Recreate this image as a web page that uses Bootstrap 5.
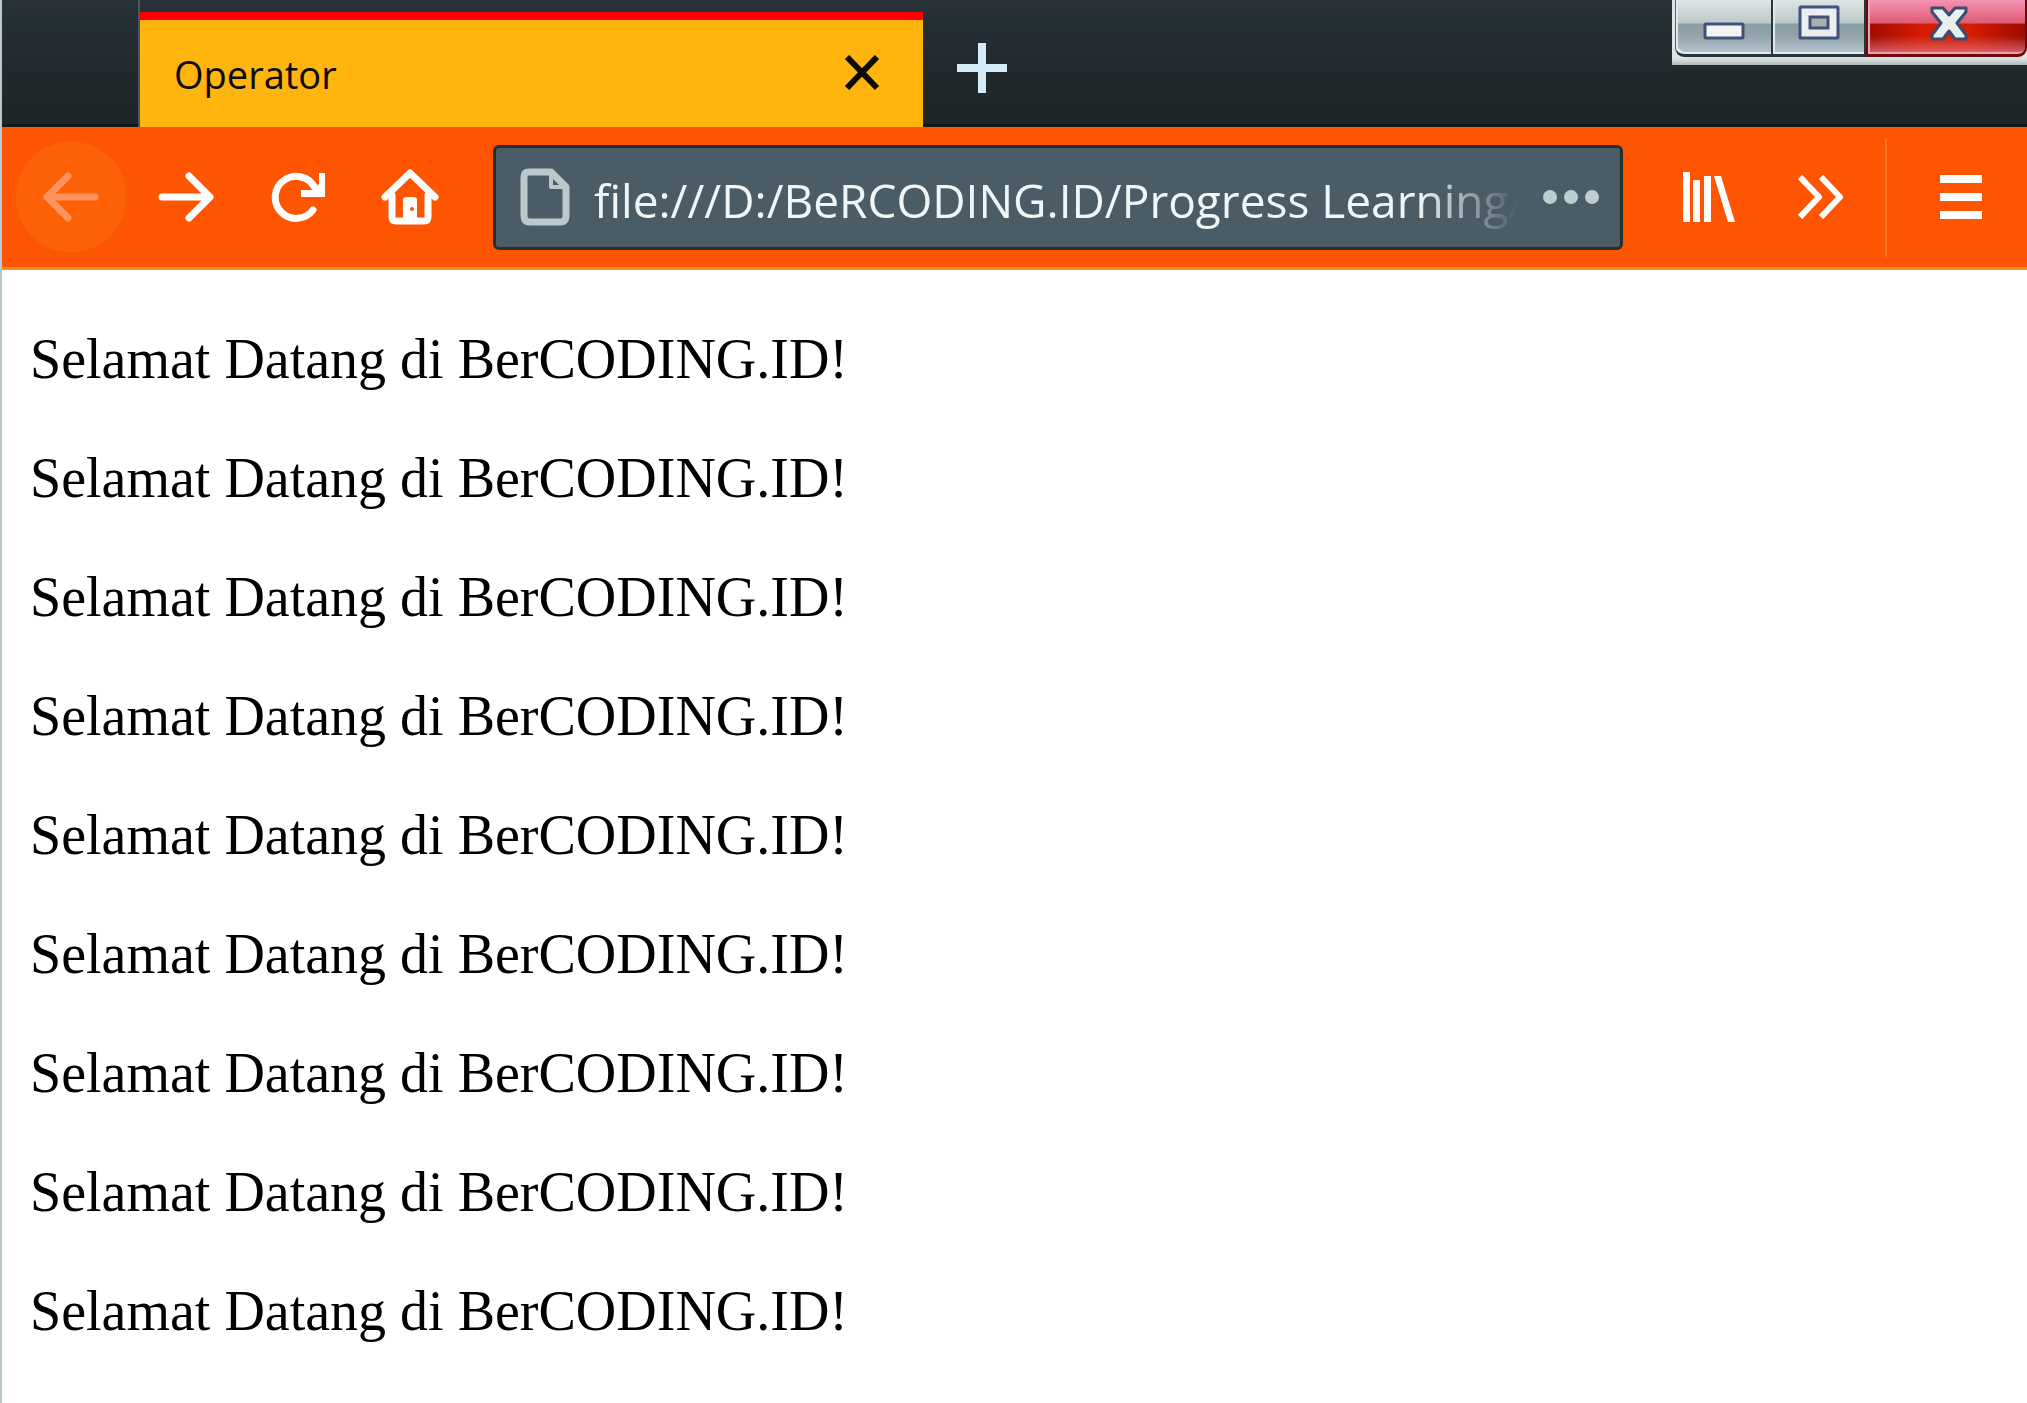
<!DOCTYPE html>
<html lang="id">
<head>
<meta charset="utf-8">
<meta name="viewport" content="width=device-width, initial-scale=1">
<title>Operator</title>
<link href="https://cdn.jsdelivr.net/npm/bootstrap@5.3.0/dist/css/bootstrap.min.css" rel="stylesheet">
<style>
  body { background: #fff; }
  .browser { border-left: 2px solid #b9c9cd; }
  .tab-strip { height: 127px; padding-left: 136px; background: linear-gradient(#2a313a, #243031 16%, #252c34 30%, #20282a 70%, #1f2628); border-bottom: 3px solid #12191a; }
  .tab-edge { border-left: 2px solid #455860; padding-top: 12px; margin-bottom: -3px; }
  .active-tab { width: 783px; background: #ffb50d; border-top: 8px solid #f00; padding: 0 42px 0 34px; color: #0c0c04; font: 38px/72px "Open Sans", sans-serif; }
  .plain { background: none; border: 0; padding: 0; display: flex; align-items: center; justify-content: center; }
  .win-controls { background: linear-gradient(#dfe5e5 56px, #d5dedd 60px, #a9b6b8); padding: 0 0 8px 3px; height: 65px; }
  .win-btn { height: 57px; border: solid #28343b; border-width: 0 2px 3px 0; background: linear-gradient(#dde5e5, #bcc9c9 23px, #8a9da1 24px, #93a5ab 36px, #b5c5d5); box-shadow: inset 2px -2px 1px #e3eaef; }
  .win-min { width: 98px; border-left: 1px solid #55656c; border-bottom-left-radius: 9px; }
  .win-max { width: 93px; }
  .win-close { width: 161px; border-color: #6c0a0a; border-left: 2px solid #6c0a0a; border-bottom-right-radius: 9px; background: linear-gradient(#f593b4, #dd5a74 23px, transparent 24px), linear-gradient(transparent 36px, #e2798acc), linear-gradient(to right, #9c0c00, #d81c00 35%, #d81c00 65%, #9c0c00); box-shadow: inset 2px -2px 1px #f0a5b8; }
  .toolbar { height: 143px; padding: 0 10px 0 12px; background: #ff5400; border-bottom: 3px solid #ff8a1c; }
  .tool { width: 112px; height: 114px; flex: none; }
  .back { width: 114px; margin-right: 2px; border-radius: 50%; background: #ff6206; border: 2px solid #f75a06; }
  .url-box { height: 105px; margin: 0 30px 0 27px; padding: 0 20px 0 24px; background: #4a5c66; border: 3px solid #26302c; border-radius: 6px; gap: 24px; min-width: 0; }
  .url-input { min-width: 0; background: none; border: 0; outline: 0; padding: 6px 0 0; color: #eef6f7; font: 46px/64px "Open Sans", sans-serif; -webkit-mask-image: linear-gradient(to right, #000 calc(100% - 100px), transparent); mask-image: linear-gradient(to right, #000 calc(100% - 100px), transparent); }
  .divider { width: 2px; height: 119px; margin: 0 18px 0 8px; background: #ff7021; }
  .page { padding: 57px 28px 50px; color: #000; font: 56px/65px "Liberation Serif", serif; }
  .page p { margin-bottom: 54px; }
  svg { display: block; flex: none; }
</style>
<script src="https://cdn.jsdelivr.net/npm/bootstrap@5.3.0/dist/js/bootstrap.bundle.min.js"></script>
</head>
<body>
<div class="browser min-vh-100">
  <header>
    <div class="tab-strip d-flex">
      <div class="tab-edge">
        <div class="active-tab h-100 d-flex align-items-center justify-content-between">
          <span>Operator</span>
          <button class="plain" type="button" aria-label="Close tab">
            <svg width="38" height="38" viewBox="0 0 38 38" stroke="#0c0c04" stroke-width="6"><path d="M4 2 34 33M34 2 4 33"/></svg>
          </button>
        </div>
      </div>
      <button class="plain align-self-center ms-4 px-2" type="button" aria-label="New tab">
        <svg width="52" height="62" viewBox="0 0 52 62" stroke="#d3ecf7" stroke-width="8"><path d="M2 37h50M27 12v50"/></svg>
      </button>
      <div class="win-controls d-flex ms-auto">
        <button class="plain win-btn win-min" type="button" aria-label="Minimize">
          <svg width="42" height="57" viewBox="0 0 42 57"><rect x="2" y="25" width="38" height="14" rx="1" fill="#f3f4f5" stroke="#42517a" stroke-width="3"/></svg>
        </button>
        <button class="plain win-btn win-max" type="button" aria-label="Maximize">
          <svg width="42" height="57" viewBox="0 0 42 57"><rect x="2" y="8" width="38" height="31" rx="1" fill="#eceff1" stroke="#42517a" stroke-width="3"/><rect x="12" y="18" width="18" height="11" fill="#a5b0b0" stroke="#42517a" stroke-width="3"/></svg>
        </button>
        <button class="plain win-btn win-close" type="button" aria-label="Close window">
          <svg width="42" height="57" viewBox="0 0 42 57"><path d="M6 9h11l6 7 6-7h11v4L31 24l9 12v4H29l-6-8-6 8H6v-4l9-12L6 13z" fill="#e9eeee" stroke="#3c4b70" stroke-width="3" stroke-linejoin="round"/></svg>
        </button>
      </div>
    </div>

    <nav class="toolbar d-flex align-items-center" aria-label="Navigation">
      <button class="plain tool back" type="button" aria-label="Back">
        <svg width="56" height="52" viewBox="0 0 56 52" fill="none" stroke="#ff935f" stroke-width="7" stroke-linecap="round" stroke-linejoin="round"><path d="M52 26H5M25 5 4 26 25 47"/></svg>
      </button>
      <button class="plain tool" type="button" aria-label="Forward">
        <svg width="56" height="52" viewBox="0 0 56 52" fill="none" stroke="#fff" stroke-width="7" stroke-linecap="round" stroke-linejoin="round"><path d="M4 26H51M31 5 52 26 31 47"/></svg>
      </button>
      <button class="plain tool" type="button" aria-label="Reload">
        <svg width="56" height="52" viewBox="0 0 56 52"><path d="M45 17A21 21 0 1 0 43 39" fill="none" stroke="#fff" stroke-width="7" stroke-linecap="round"/><path d="M49 2h6v24H31v-7h12l6-6z" fill="#fff"/></svg>
      </button>
      <button class="plain tool" type="button" aria-label="Home">
        <svg width="58" height="58" viewBox="0 0 58 58"><path d="M4 29 29 5 54 29M11 27V49Q11 53 15 53H43Q47 53 47 49V27" fill="none" stroke="#fff" stroke-width="7" stroke-linecap="round" stroke-linejoin="round"/><path d="M22 53V32q0-3 3-3h8q3 0 3 3v21z" fill="#fff"/><circle cx="31" cy="41" r="2" fill="#ff5400"/></svg>
      </button>

      <div class="url-box d-flex align-items-center flex-fill">
        <svg width="50" height="58" viewBox="0 0 50 58" fill="none" stroke="#b9c9cc" stroke-linejoin="round"><path d="M9 4H31L46 19V48Q46 54 40 54H10Q4 54 4 48V9Q4 4 9 4Z" stroke-width="7"/><path d="M31 5V19H46" stroke-width="4"/></svg>
        <input class="url-input flex-fill" type="text" aria-label="Address" value="file:///D:/BeRCODING.ID/Progress Learning/">
        <button class="plain" type="button" aria-label="Page actions">
          <svg width="58" height="16" viewBox="0 0 58 16" fill="#bccdd0"><circle cx="8" cy="8" r="7"/><circle cx="29" cy="8" r="7"/><circle cx="50" cy="8" r="7"/></svg>
        </button>
      </div>

      <button class="plain tool" type="button" aria-label="Library">
        <svg width="52" height="50" viewBox="0 0 52 50" fill="#fff"><path d="M0 0h7v50H0zM10 8h7v42h-7zM21 4h7v46h-7zM31 4h7l14 46h-7z"/></svg>
      </button>
      <button class="plain tool" type="button" aria-label="More tools">
        <svg width="46" height="44" viewBox="0 0 46 44" fill="none" stroke="#fff" stroke-width="6" stroke-linejoin="round"><path d="M2 2 21 22 2 42M23 2 42 22 23 42"/></svg>
      </button>
      <div class="divider"></div>
      <button class="plain tool" type="button" aria-label="Open menu">
        <svg width="42" height="44" viewBox="0 0 42 44" fill="#fff"><path d="M0 0h42v8H0zM0 18h42v8H0zM0 36h42v8H0z"/></svg>
      </button>
    </nav>
  </header>

  <main class="page">
    <p>Selamat Datang di BerCODING.ID!</p>
    <p>Selamat Datang di BerCODING.ID!</p>
    <p>Selamat Datang di BerCODING.ID!</p>
    <p>Selamat Datang di BerCODING.ID!</p>
    <p>Selamat Datang di BerCODING.ID!</p>
    <p>Selamat Datang di BerCODING.ID!</p>
    <p>Selamat Datang di BerCODING.ID!</p>
    <p>Selamat Datang di BerCODING.ID!</p>
    <p class="mb-0">Selamat Datang di BerCODING.ID!</p>
  </main>
</div>
</body>
</html>
